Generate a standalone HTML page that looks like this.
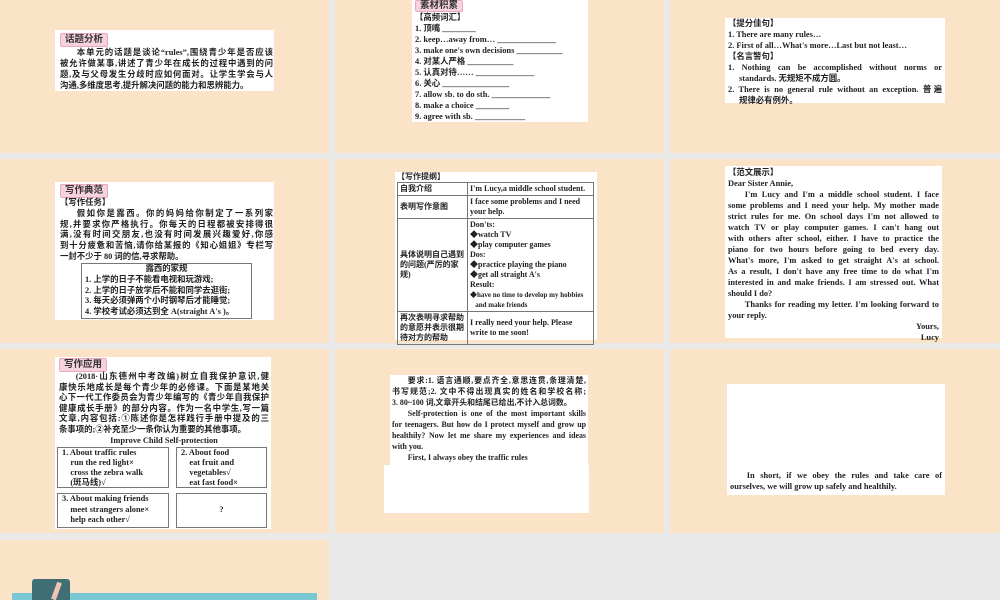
<!DOCTYPE html>
<html><head><meta charset="utf-8"><style>
*{margin:0;padding:0;box-sizing:border-box}
body{width:1000px;height:600px;background:#e9e9e9;position:relative;overflow:hidden;font-family:"Liberation Serif","Noto Sans CJK SC",serif;font-weight:bold;color:#222;font-size:8.4px;line-height:11px}
.p{position:absolute;background:#fae3c6}
.w{position:absolute;background:#fff}
.w div{white-space:nowrap}
.tag{display:inline-block;background:#f6d3dc;border:1px solid #e9a9bd;border-radius:2px;padding:0 4px;font-size:9.5px;line-height:12px;color:#333}
.in{text-indent:2em}
.j{text-align:justify;text-align-last:justify}
table{border-collapse:collapse}
td{border:1px solid #777;vertical-align:top;padding:1px 2px}
</style></head><body>
<div class="p" style="left:0;top:0;width:329px;height:153px"></div>
<div class="p" style="left:335px;top:0;width:329px;height:153px"></div>
<div class="p" style="left:670px;top:0;width:330px;height:153px"></div>
<div class="p" style="left:0;top:159px;width:329px;height:184px"></div>
<div class="p" style="left:335px;top:159px;width:329px;height:184px"></div>
<div class="p" style="left:670px;top:159px;width:330px;height:184px"></div>
<div class="p" style="left:0;top:349px;width:329px;height:184px"></div>
<div class="p" style="left:335px;top:349px;width:329px;height:184px"></div>
<div class="p" style="left:670px;top:349px;width:330px;height:184px"></div>
<div class="p" style="left:0;top:540px;width:329px;height:60px"></div>

<!-- A -->
<div class="w" style="left:55px;top:30px;width:219px;height:61px;padding:3px 1px 0 5px">
<span class="tag">话题分析</span>
<div class="in j">本单元的话题是谈论“rules”,围绕青少年是否应该</div>
<div class="j">被允许做某事,讲述了青少年在成长的过程中遇到的问</div>
<div class="j">题,及与父母发生分歧时应如何面对。让学生学会与人</div>
<div>沟通,多维度思考,提升解决问题的能力和思辨能力。</div>
</div>

<!-- B -->
<div class="w" style="left:412px;top:0;width:176px;height:122px;padding:0 3px">
<span class="tag" style="line-height:10px">素材积累</span>
<div>【高频词汇】</div>
<div>1. 顶嘴 ________</div>
<div>2. keep…away from… ______________</div>
<div>3. make one's own decisions ___________</div>
<div>4. 对某人严格 ___________</div>
<div>5. 认真对待…… ______________</div>
<div>6. 关心 ________________</div>
<div>7. allow sb. to do sth. ______________</div>
<div>8. make a choice ________</div>
<div>9. agree with sb. ____________</div>
</div>

<!-- C -->
<div class="w" style="left:725px;top:18px;width:220px;height:85px;padding:0 3px">
<div>【提分佳句】</div>
<div>1. There are many rules…</div>
<div>2. First of all…What's more…Last but not least…</div>
<div>【名言警句】</div>
<div class="j">1. Nothing can be accomplished without norms or</div>
<div style="padding-left:11px">standards. 无规矩不成方圆。</div>
<div class="j">2. There is no general rule without an exception. 普遍</div>
<div style="padding-left:11px">规律必有例外。</div>
</div>

<!-- D -->
<div class="w" style="left:55px;top:182px;width:219px;height:138px;padding:2px 1px 0 5px;line-height:10.8px">
<span class="tag">写作典范</span>
<div>【写作任务】</div>
<div class="in j">假如你是露西。你的妈妈给你制定了一系列家</div>
<div class="j">规,并要求你严格执行。你每天的日程都被安排得很</div>
<div class="j">满,没有时间交朋友,也没有时间发展兴趣爱好,你感</div>
<div class="j">到十分疲惫和苦恼,请你给某报的《知心姐姐》专栏写</div>
<div>一封不少于 80 词的信,寻求帮助。</div>
<div style="position:absolute;left:26px;top:81px;width:171px;height:56px;border:1px solid #777;padding:0 3px">
<div style="text-align:center">露西的家规</div>
<div>1. 上学的日子不能看电视和玩游戏;</div>
<div>2. 上学的日子放学后不能和同学去逛街;</div>
<div>3. 每天必须弹两个小时钢琴后才能睡觉;</div>
<div>4. 学校考试必须达到全 A(straight A's )。</div>
</div>
</div>

<!-- E -->
<div class="w" style="left:395px;top:172px;width:202px;height:168px;padding:0 2px;font-size:8px;line-height:10px">
<div>【写作提纲】</div>
<table style="width:197px;font-size:8px;line-height:10px">
<tr><td style="width:70px">自我介绍</td><td>I'm Lucy,a middle school student.</td></tr>
<tr><td style="vertical-align:middle">表明写作意图</td><td>I face some problems and I need your help.</td></tr>
<tr><td style="vertical-align:middle">具体说明自己遇到的问题(严厉的家规)</td><td>Don'ts:<br>◆watch TV<br>◆play computer games<br>Dos:<br>◆practice playing the piano<br>◆get all straight A's<br>Result:<br><span style="font-size:7px">◆have no time to develop my hobbies<br>&nbsp;&nbsp;&nbsp;and make friends</span></td></tr>
<tr><td>再次表明寻求帮助的意愿并表示很期待对方的帮助</td><td style="vertical-align:middle">I really need your help. Please write to me soon!</td></tr>
</table>
</div>

<!-- F -->
<div class="w" style="left:725px;top:166px;width:217px;height:172px;padding:1px 3px">
<div>【范文展示】</div>
<div>Dear Sister Annie,</div>
<div class="in j">I'm Lucy and I'm a middle school student. I face</div>
<div class="j">some problems and I need your help. My mother made</div>
<div class="j">strict rules for me. On school days I'm not allowed to</div>
<div class="j">watch TV or play computer games. I can't hang out</div>
<div class="j">with others after school, either. I have to practice the</div>
<div class="j">piano for two hours before going to bed every day.</div>
<div class="j">What's more, I'm asked to get straight A's at school.</div>
<div class="j">As a result, I don't have any free time to do what I'm</div>
<div class="j">interested in and make friends. I am stressed out. What</div>
<div>should I do?</div>
<div class="in j">Thanks for reading my letter. I'm looking forward to</div>
<div>your reply.</div>
<div style="text-align:right">Yours,</div>
<div style="text-align:right">Lucy</div>
</div>

<!-- G -->
<div class="w" style="left:55px;top:357px;width:216px;height:172px;padding:1px 2px 0 4px;line-height:10.6px">
<span class="tag">写作应用</span>
<div class="in j">(2018·山东德州中考改编)树立自我保护意识,健</div>
<div class="j">康快乐地成长是每个青少年的必修课。下面是某地关</div>
<div class="j">心下一代工作委员会为青少年编写的《青少年自我保护</div>
<div class="j">健康成长手册》的部分内容。作为一名中学生,写一篇</div>
<div class="j">文章,内容包括:①陈述你是怎样践行手册中提及的三</div>
<div>条事项的;②补充至少一条你认为重要的其他事项。</div>
<div style="text-align:center">Improve Child Self-protection</div>
<div style="position:absolute;left:2px;top:90px;width:112px;height:41px;border:1px solid #777;padding:0 4px;line-height:10px">1. About traffic rules<br>&nbsp;&nbsp;&nbsp;&nbsp;run the red light×<br>&nbsp;&nbsp;&nbsp;&nbsp;cross the zebra walk<br>&nbsp;&nbsp;&nbsp;&nbsp;(斑马线)√</div>
<div style="position:absolute;left:121px;top:90px;width:91px;height:41px;border:1px solid #777;padding:0 4px;line-height:10px">2. About food<br>&nbsp;&nbsp;&nbsp;&nbsp;eat fruit and<br>&nbsp;&nbsp;&nbsp;&nbsp;vegetables√<br>&nbsp;&nbsp;&nbsp;&nbsp;eat fast food×</div>
<div style="position:absolute;left:2px;top:136px;width:112px;height:35px;border:1px solid #777;padding:0 4px;line-height:10.5px">3. About making friends<br>&nbsp;&nbsp;&nbsp;&nbsp;meet strangers alone×<br>&nbsp;&nbsp;&nbsp;&nbsp;help each other√</div>
<div style="position:absolute;left:121px;top:136px;width:91px;height:35px;border:1px solid #777;text-align:center;padding-top:11px">?</div>
</div>

<!-- H -->
<div class="w" style="left:390px;top:375px;width:198px;height:92px;padding:0 2px;font-size:7.9px;line-height:11px">
<div class="in j">要求:1. 语言通顺,要点齐全,意思连贯,条理清楚,</div>
<div class="j">书写规范;2. 文中不得出现真实的姓名和学校名称;</div>
<div>3. 80~100 词,文章开头和结尾已给出,不计入总词数。</div>
<div class="in j">Self-protection is one of the most important skills</div>
<div class="j">for teenagers. But how do I protect myself and grow up</div>
<div class="j">healthily? Now let me share my experiences and ideas</div>
<div>with you.</div>
<div class="in">First, I always obey the traffic rules</div>
</div>
<div class="w" style="left:384px;top:465px;width:205px;height:48px"></div>

<!-- I -->
<div class="w" style="left:727px;top:384px;width:218px;height:111px;padding:86px 3px 0">
<div class="in j">In short, if we obey the rules and take care of</div>
<div>ourselves, we will grow up safely and healthily.</div>
</div>

<!-- row4 -->
<div style="position:absolute;left:12px;top:593px;width:305px;height:7px;background:#7ac8d4"></div>
<div style="position:absolute;left:32px;top:579px;width:38px;height:21px;background:#3f6e74;border-radius:3px 3px 0 0"></div>
<div style="position:absolute;left:54px;top:582px;width:5px;height:18px;background:#f0c3b6;transform:rotate(20deg)"></div>
</body></html>
